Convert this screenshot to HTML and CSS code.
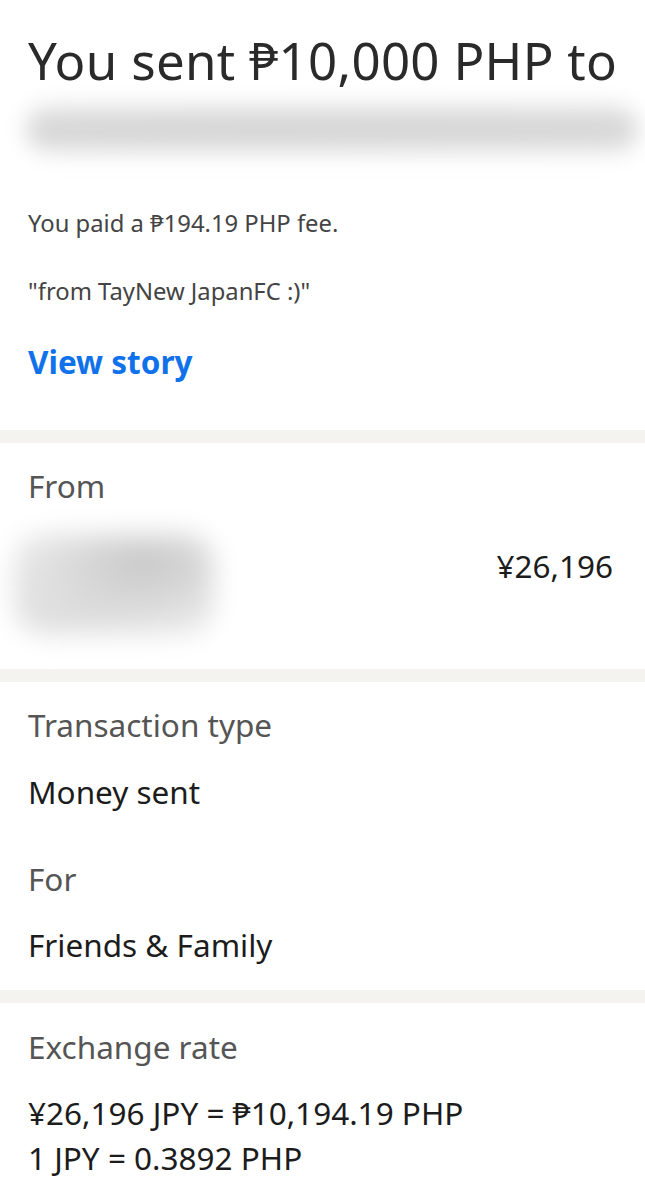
FILE: index.html
```html
<!DOCTYPE html>
<html lang="en">
<head>
<meta charset="utf-8">
<title>Transaction details</title>
<link rel="stylesheet" href="styles.css">
</head>
<body>
<main class="page">
  <section class="card card-top">
    <h1 class="title">You sent ₱10,000 PHP to</h1>
    <div class="redact redact-name" aria-hidden="true"></div>
    <p class="note note-fee">You paid a ₱194.19 PHP fee.</p>
    <p class="note note-quote">"from TayNew JapanFC :)"</p>
    <a class="link" href="#">View story</a>
  </section>

  <section class="card card-from">
    <div class="label">From</div>
    <div class="from-row">
      <div class="redact redact-sender" aria-hidden="true"></div>
      <div class="value amount">¥26,196</div>
    </div>
  </section>

  <section class="card card-type">
    <div class="label">Transaction type</div>
    <div class="value value-type">Money sent</div>
    <div class="label label-for">For</div>
    <div class="value value-for">Friends &amp; Family</div>
  </section>

  <section class="card card-rate">
    <div class="label">Exchange rate</div>
    <div class="rate">
      <div class="value rate-line">¥26,196 JPY = ₱10,194.19 PHP</div>
      <div class="value rate-line">1 JPY = 0.3892 PHP</div>
    </div>
  </section>
</main>
</body>
</html>
```

FILE: styles.css
```css
* { box-sizing: border-box; }
html, body { margin: 0; padding: 0; }
body {
  background: #f5f3ef;
  font-family: "Noto Sans", "Open Sans", sans-serif;
  color: #1c1c1c;
  width: 645px;
  overflow: hidden;
}
.page {
  display: flex;
  flex-direction: column;
  gap: 13px;
}
.card {
  background: #ffffff;
  padding-left: 28px;
  padding-right: 32px;
  overflow: hidden;
}
.card-top { height: 430px; padding-top: 30px; }
.title {
  margin: 0;
  font-size: 51px;
  line-height: 60px;
  font-weight: 400;
  color: #2a2a2a;
  white-space: nowrap;
  letter-spacing: 0.3px;
}
.redact {
  border-radius: 30px;
}
.redact-name {
  margin: 16px 0 0 -2px;
  width: 612px;
  height: 46px;
  filter: blur(11px);
  background:
    radial-gradient(ellipse at 15% 55%, #d4d4d4 0%, rgba(228,228,228,0) 70%),
    radial-gradient(ellipse at 50% 50%, #d8d8d8 0%, rgba(228,228,228,0) 70%),
    radial-gradient(ellipse at 82% 50%, #d3d3d3 0%, rgba(228,228,228,0) 70%),
    #e2e2e2;
}
.note {
  margin: 0;
  font-size: 23.8px;
  line-height: 32px;
  color: #444444;
}
.note-fee { margin-top: 55px; }
.note-quote { margin-top: 36px; }
.link {
  display: block;
  margin-top: 35px;
  font-size: 31.5px;
  line-height: 40px;
  font-weight: 700;
  color: #1072eb;
  text-decoration: none;
}
.label {
  font-size: 31.5px;
  line-height: 36px;
  color: #555555;
}
.value {
  font-size: 31.5px;
  line-height: 36px;
  color: #1c1c1c;
}
.card-from { height: 226px; padding-top: 25px; }
.from-row {
  display: flex;
  justify-content: space-between;
  align-items: flex-start;
  margin-top: 20px;
}
.redact-sender {
  margin: 10px 0 0 -14px;
  width: 200px;
  height: 100px;
  filter: blur(13px);
  background:
    radial-gradient(ellipse at 65% 30%, #c8c8c8 0%, rgba(232,232,232,0) 60%),
    radial-gradient(ellipse at 30% 80%, #dddddd 0%, rgba(232,232,232,0) 60%),
    #e6e6e6;
}
.amount { margin-top: 24px; }
.card-type { height: 308px; padding-top: 25px; }
.value-type { margin-top: 31px; }
.label-for { margin-top: 51px; }
.value-for { margin-top: 30px; }
.card-rate { height: 197px; padding-top: 26px; }
.rate { margin-top: 25px; }
.rate-line { line-height: 45px; }
```
